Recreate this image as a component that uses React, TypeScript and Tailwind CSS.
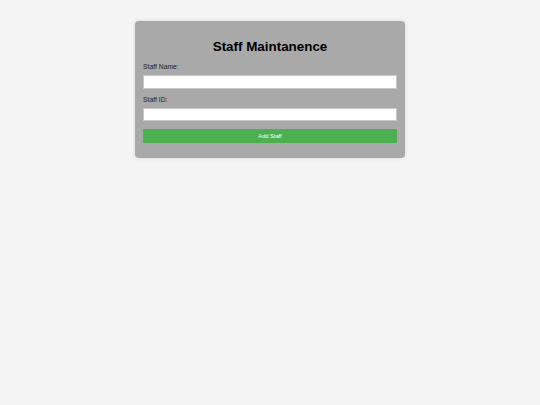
import React from "react";

export default function App() {
  return (
    <div className="w-[540px] h-[405px] bg-[#f4f4f4] overflow-hidden" style={{ fontFamily: '"Liberation Sans", Arial, sans-serif' }}>
      <div className="ml-[135px] mt-[21px] w-[270px] bg-[#a9a9a9] rounded-[4px] shadow-[0_0_4px_rgba(0,0,0,0.12)] px-[8px] pt-[18px] pb-[15px]">
        <h2 className="text-[13.4px] font-bold text-black text-center leading-[16px] h-[16px]">Staff Maintanence</h2>
        <div className="mt-[8.2px] text-[6.8px] leading-[8px] h-[8px] text-[#222]">Staff Name:</div>
        <input className="block mt-[4.3px] w-full h-[13.5px] bg-white border border-[#c8c8c8] outline-none" />
        <div className="mt-[6.8px] text-[6.8px] leading-[8px] h-[8px] text-[#222]">Staff ID:</div>
        <input className="block mt-[4px] w-full h-[13.7px] bg-white border border-[#c8c8c8] outline-none" />
        <button className="block mt-[7.3px] w-full h-[14.4px] bg-[#4caf50] text-white text-[5.7px] leading-[14.4px] text-center">Add Staff</button>
      </div>
    </div>
  );
}
